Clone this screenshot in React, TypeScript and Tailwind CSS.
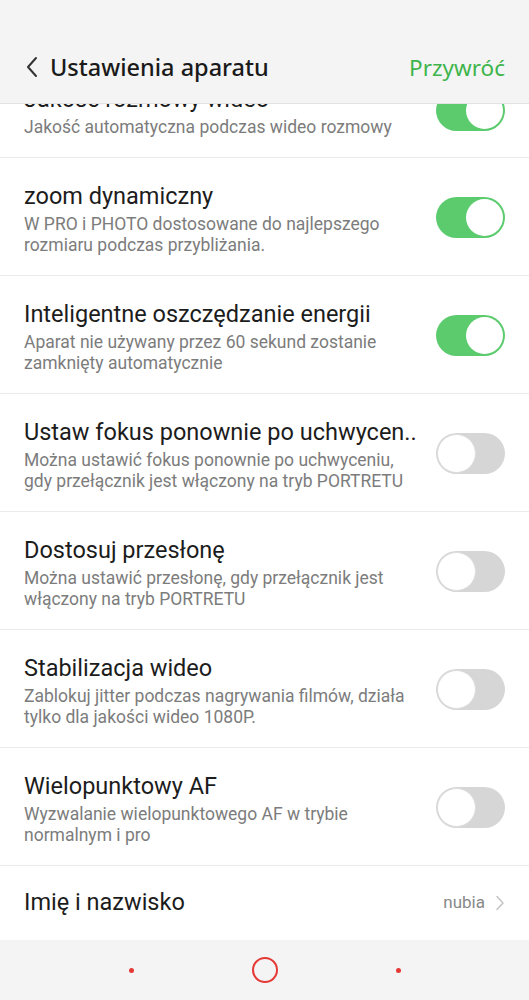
import React from "react";

type Item = { title: string; desc: string[]; on: boolean };

const items: Item[] = [
  { title: "zoom dynamiczny", desc: ["W PRO i PHOTO dostosowane do najlepszego", "rozmiaru podczas przybliżania."], on: true },
  { title: "Inteligentne oszczędzanie energii", desc: ["Aparat nie używany przez 60 sekund zostanie", "zamknięty automatycznie"], on: true },
  { title: "Ustaw fokus ponownie po uchwycen..", desc: ["Można ustawić fokus ponownie po uchwyceniu,", "gdy przełącznik jest włączony na tryb PORTRETU"], on: false },
  { title: "Dostosuj przesłonę", desc: ["Można ustawić przesłonę, gdy przełącznik jest", "włączony na tryb PORTRETU"], on: false },
  { title: "Stabilizacja wideo", desc: ["Zablokuj jitter podczas nagrywania filmów, działa", "tylko dla jakości wideo 1080P."], on: false },
  { title: "Wielopunktowy AF", desc: ["Wyzwalanie wielopunktowego AF w trybie", "normalnym i pro"], on: false },
];

function Toggle({ on }: { on: boolean }) {
  return on ? (
    <div className="w-[69px] h-[41px] -mt-[3px] rounded-full bg-[#5ccb6e] flex items-center justify-end p-[2px] shrink-0">
      <div className="w-[37px] h-[37px] rounded-full bg-white" />
    </div>
  ) : (
    <div className="w-[69px] h-[41px] -mt-[3px] rounded-full bg-[#d6d6d6] flex items-center justify-start p-[1px] shrink-0">
      <div className="w-[39px] h-[39px] rounded-full bg-white border border-[#dcdcdc]" />
    </div>
  );
}

function Row({ item }: { item: Item }) {
  return (
    <div className="flex items-center justify-between px-6 pt-[24px] pb-[19px] border-b border-[#ebebeb] bg-white">
      <div className="flex flex-col">
        <div className="text-[23.5px] leading-[28px] text-[#1c1c1c] whitespace-nowrap">{item.title}</div>
        <div className="mt-[4px] text-[17.5px] leading-[21px] text-[#7c7c7c]">
          {item.desc.map((d, i) => (
            <div key={i} className="whitespace-nowrap">{d}</div>
          ))}
        </div>
      </div>
      <Toggle on={item.on} />
    </div>
  );
}

export default function App() {
  return (
    <div className="w-[529px] h-[1000px] flex flex-col bg-white overflow-hidden" style={{ fontFamily: "Roboto, 'Noto Sans', sans-serif" }}>
      <div className="h-[104px] shrink-0 bg-[#f4f4f4] border-b border-[#e2e2e2] flex items-end pb-[18px] px-6 relative z-10">
        <div className="flex items-center justify-between w-full">
          <div className="flex items-center">
            <svg width="14" height="22" viewBox="0 0 14 22" className="ml-[1px]">
              <path d="M11 2 L3 11 L11 20" fill="none" stroke="#333" strokeWidth="2" strokeLinecap="round" strokeLinejoin="round" />
            </svg>
            <span className="ml-[11px] text-[23.5px] font-medium text-[#1a1a1a]" style={{ fontFamily: "'Noto Sans', Roboto, sans-serif" }}>
              Ustawienia aparatu
            </span>
          </div>
          <span className="text-[22.5px] text-[#3eb54c]" style={{ fontFamily: "'Noto Sans', Roboto, sans-serif" }}>Przywróć</span>
        </div>
      </div>
      <div className="flex-1 overflow-hidden flex flex-col">
        <div className="-mt-[43px]">
          <div className="flex items-center justify-between px-6 pt-[24px] pb-[19px] border-b border-[#ebebeb] bg-white">
            <div className="flex flex-col">
              <div className="text-[23.5px] leading-[28px] text-[#1c1c1c] whitespace-nowrap">Jakość rozmowy wideo</div>
              <div className="mt-[4px] text-[17.5px] leading-[21px] text-[#7c7c7c] whitespace-nowrap">Jakość automatyczna podczas wideo rozmowy</div>
            </div>
            <Toggle on={true} />
          </div>
          {items.map((it, i) => (
            <Row key={i} item={it} />
          ))}
          <div className="h-[75px] flex items-center justify-between px-6 border-b border-[#e0e0e0] bg-white">
            <span className="text-[23.5px] text-[#1c1c1c]">Imię i nazwisko</span>
            <div className="flex items-center">
              <span className="text-[17px] text-[#888]">nubia</span>
              <svg width="10" height="16" viewBox="0 0 10 16" className="ml-[10px]">
                <path d="M2 1.5 L8 8 L2 14.5" fill="none" stroke="#c4c4c4" strokeWidth="1.5" strokeLinecap="round" strokeLinejoin="round" />
              </svg>
            </div>
          </div>
        </div>
      </div>
      <div className="h-[60px] shrink-0 bg-[#f4f4f4] flex items-center justify-center">
        <div className="flex items-center">
          <div className="w-[5px] h-[5px] rounded-full bg-[#e53935]" />
          <div className="w-[118px]" />
          <div className="w-[26px] h-[26px] rounded-full border-[2.5px] border-[#e53935]" />
          <div className="w-[118px]" />
          <div className="w-[5px] h-[5px] rounded-full bg-[#e53935]" />
        </div>
      </div>
    </div>
  );
}
